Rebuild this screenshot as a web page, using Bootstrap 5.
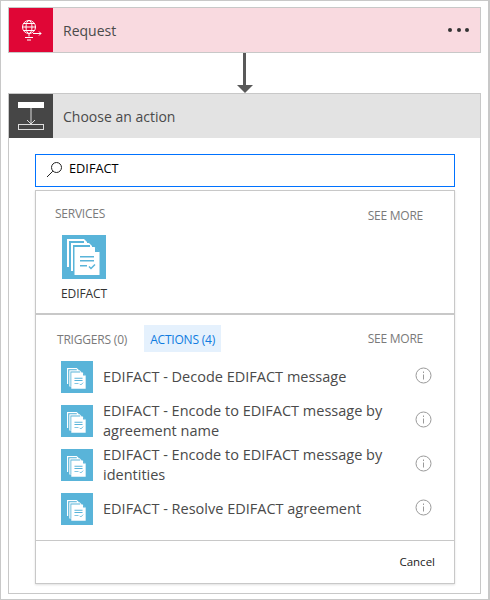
<!doctype html>
<html lang="en">
<head>
    <meta charset="utf-8">
    <meta name="viewport" content="width=device-width, initial-scale=1">
    <title>Logic App Designer</title>
    <link href="https://cdn.jsdelivr.net/npm/bootstrap@5.3.3/dist/css/bootstrap.min.css" rel="stylesheet">
    <style>
        html, body {
            height: 600px;
            overflow: hidden;
        }

        body {
            background: #fff;
            font-family: "Open Sans", "Noto Sans", sans-serif;
            font-size: 14px;
            color: #4a4a4a;
        }

        .frame-outer {
            width: 490px;
            height: 600px;
            border: 1px solid #c8c8c8;
            border-right-width: 2px;
            padding: 6px 7px 5px 7px;
        }

        .step-head {
            height: 46px;
            border: 1px solid #c8c8c8;
        }

        .step-request {
            background: #f9dae0;
        }

        .step-icon {
            width: 44px;
            height: 44px;
            flex: none;
        }

        .step-icon-red {
            background: #e00636;
        }

        .step-icon-dark {
            background: #464646;
        }

        .step-title {
            margin-left: 10px;
            font-size: 14px;
        }

        .dots {
            gap: 4.5px;
            margin-right: 11px;
        }

        .dots i {
            display: block;
            width: 4px;
            height: 4px;
            border-radius: 50%;
            background: #333;
        }

        .connector {
            height: 40px;
        }

        .connector svg {
            display: block;
        }

        .step-choose {
            height: 501px;
            border: 1px solid #c8c8c8;
        }

        .choose-head {
            height: 44px;
            background: #e3e3e3;
        }

        .choose-body {
            padding: 16px 25px 0 26px;
        }

        .search-box {
            height: 33px;
            border: 1px solid #0072ff;
            padding-left: 10px;
            padding-bottom: 3px;
            font-size: 12.75px;
            color: #000;
            margin-bottom: 3px;
        }

        .search-box svg {
            margin-right: 6px;
        }

        .result-panel {
            height: 394px;
            border: 1px solid #c8c8c8;
            box-shadow: 0 1px 2px rgba(0, 0, 0, .12);
        }

        .panel-services {
            height: 124px;
            border-bottom: 2px solid #c8c8c8;
            padding: 14px 31px 0 19px;
        }

        .cap-label {
            font-size: 12px;
            color: #7a7a7a;
            letter-spacing: -0.25px;
        }

        .cap-more {
            margin-top: 2px;
        }

        .cap-tabs {
            margin-top: 1px;
        }

        .service-tile {
            margin: 10px 0 0 7px;
            width: 44px;
        }

        .service-tile svg {
            display: block;
        }

        .service-name {
            margin-top: 6px;
            margin-left: -1px;
            font-size: 12px;
            letter-spacing: -0.1px;
            white-space: nowrap;
            color: #333;
        }

        .panel-actions {
            height: 226px;
            border-bottom: 1px solid #c8c8c8;
            padding: 10px 31px 0 15px;
        }

        .tab-pick {
            font-size: 12px;
            color: #7a7a7a;
            letter-spacing: -0.2px;
            padding: 6px 6px 4px;
            line-height: 17px;
            height: 27px;
        }

        .tab-active {
            background: #e5f1fd;
            color: #0f7be0;
            margin-left: 11px;
        }

        .action-row {
            height: 44px;
            margin-left: 10px;
            margin-right: -9px;
        }

        .action-list {
            margin-top: 3px;
        }

        .action-tile {
            width: 32px;
            height: 32px;
            flex: none;
        }

        .action-text {
            margin-left: 10px;
            width: 296px;
            font-size: 14.5px;
            line-height: 20px;
        }

        .info-mark {
            margin-left: auto;
            margin-bottom: 4px;
            flex: none;
        }

        .panel-foot {
            padding: 12px 19px 0 0;
            font-size: 11.5px;
            color: #222;
        }
    </style>
</head>

<body>
    <div class="frame-outer">
        <div class="step-head step-request d-flex align-items-center">
            <div class="step-icon step-icon-red d-flex align-items-center justify-content-center">
                <svg width="24" height="24" viewBox="0 0 24 24" fill="none" stroke="#fff" stroke-width="1">
                    <circle cx="10" cy="9" r="6.5" />
                    <ellipse cx="10" cy="9" rx="3" ry="6.5" />
                    <path d="M3.5 9h13M4.500 5.500h11M4.500 12.500h11M10 15.500v3M6 19.500h8M8 22h4" />
                    <path d="M14 15.500h8M20 13.500l2 2-2 2" />
                </svg>
            </div>
            <div class="step-title">Request</div>
            <div class="dots d-flex ms-auto"><i></i><i></i><i></i></div>
        </div>

        <div class="connector d-flex justify-content-center">
            <svg width="16" height="40" viewBox="0 0 16 40">
                <rect x="6" y="0" width="3" height="33" fill="#595959" />
                <path d="M0 32h16l-8 8z" fill="#595959" />
            </svg>
        </div>

        <div class="step-choose">
            <div class="choose-head d-flex align-items-center">
                <div class="step-icon step-icon-dark d-flex align-items-center justify-content-center">
                    <svg width="28" height="30" viewBox="0 0 28 30" fill="none">
                        <rect x="1" y="1" width="26" height="6" fill="#fff" />
                        <path d="M14 7v16" stroke="#ddd" stroke-width="1" />
                        <path d="M10 19l4 4 4-4" stroke="#ddd" stroke-width="1" />
                        <rect x="1.500" y="23.500" width="25" height="5" stroke="#ddd" />
                    </svg>
                </div>
                <div class="step-title">Choose an action</div>
            </div>

            <div class="choose-body">
                <div class="search-box d-flex align-items-center">
                    <svg width="17" height="17" viewBox="0 0 17 17" fill="none" stroke="#222" stroke-width="1">
                        <circle cx="10.500" cy="6.500" r="5" />
                        <path d="M6.800 10.200L1 16" />
                    </svg>
                    EDIFACT
                </div>

                <div class="result-panel">
                    <div class="panel-services">
                        <div class="d-flex justify-content-between align-items-start">
                            <span class="cap-label">SERVICES</span>
                            <span class="cap-label cap-more">SEE MORE</span>
                        </div>
                        <div class="service-tile">
                            <svg width="44" height="44" viewBox="0 0 44 44">
                                <rect width="44" height="44" fill="#59b4d9" />
                                <use href="#docs-sheets" />
                            </svg>
                            <div class="service-name">EDIFACT</div>
                        </div>
                    </div>

                    <div class="panel-actions">
                        <div class="d-flex align-items-center">
                            <span class="tab-pick">TRIGGERS (0)</span>
                            <span class="tab-pick tab-active">ACTIONS (4)</span>
                            <span class="cap-label cap-tabs ms-auto">SEE MORE</span>
                        </div>
                        <div class="action-list" id="actions"></div>
                    </div>

                    <div class="panel-foot text-end">Cancel</div>
                </div>
            </div>
        </div>
    </div>

    <svg width="0" height="0" class="d-block">
        <defs>
            <g id="docs-sheets">
                <path d="M5 4h17l3 3v25H5z" fill="#fff" />
                <path d="M7 6h15v26H7z" fill="#59b4d9" />
                <path d="M9 8h18l3 3v25H9z" fill="#fff" />
                <path d="M11 10h17v26H11z" fill="#59b4d9" />
                <path d="M12.500 12h20l5 5v23h-25z" fill="#fff" />
                <path d="M33 12l5 5h-5z" fill="#59b4d9" />
                <path d="M18 21h14v1.500H18zM18 25h14v1.500H18zM18 30h7v1.500H18z" fill="#59b4d9" />
                <path d="M27 31.500l2 2 4-4" fill="none" stroke="#59b4d9" stroke-width="1.500" />
            </g>
        </defs>
    </svg>

    <script src="https://cdn.jsdelivr.net/npm/bootstrap@5.3.3/dist/js/bootstrap.bundle.min.js"></script>
    <script>
        var actions = [
            "EDIFACT - Decode EDIFACT message",
            "EDIFACT - Encode to EDIFACT message by agreement name",
            "EDIFACT - Encode to EDIFACT message by identities",
            "EDIFACT - Resolve EDIFACT agreement"
        ];

        var list = document.getElementById("actions");

        for (var i = 0; i < actions.length; i++) {
            list.innerHTML +=
                '<div class="action-row d-flex align-items-center">' +
                '<svg class="action-tile" viewBox="0 0 44 44"><rect width="44" height="44" fill="#59b4d9" />' +
                '<g transform="translate(4.300 6.500) scale(.79)"><use href="#docs-sheets" /></g></svg>' +
                '<div class="action-text">' + actions[i] + '</div>' +
                '<svg class="info-mark" width="17" height="17" viewBox="0 0 17 17" fill="none" stroke="#9a9a9a">' +
                '<circle cx="8.500" cy="8.500" r="7.500" /><path d="M8.500 7.500v5M8.500 4.500v1.500" /></svg>' +
                '</div>';
        }
    </script>
</body>

</html>
